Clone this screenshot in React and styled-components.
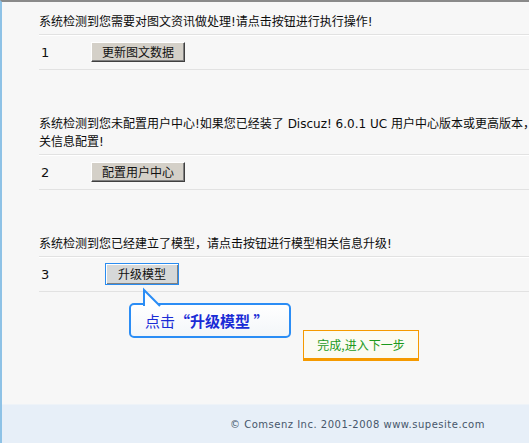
import React from "react";
import styled, { createGlobalStyle } from "styled-components";

const Global = createGlobalStyle`
  html, body { margin: 0; padding: 0; overflow: hidden; background: #f7f7f7; }
  body { font-family: "DejaVu Sans", "Noto Sans CJK SC", sans-serif; }
`;

const Page = styled.div`
  position: relative;
  width: 700px;
  min-height: 443px;
  border-top: 2px solid #8a8a8a;
  border-left: 2px solid #8ec2e6;
  box-sizing: border-box;
  background: #f7f7f7;
  display: flex;
  flex-direction: column;
`;

const Content = styled.div`
  padding: 11px 0 0 37px;
  display: flex;
  flex-direction: column;
`;

const Section = styled.section`
  & + & { margin-top: 45px; }
`;

const Note = styled.p`
  margin: 0;
  padding-bottom: 3px;
  font-size: 12px;
  line-height: 18px;
  color: #0c0c0c;
  white-space: nowrap;
  font-family: "DejaVu Sans", "Noto Sans CJK SC", sans-serif;
`;

const Row = styled.div`
  display: flex;
  align-items: center;
  height: 34px;
  border-top: 1px solid #e2e2e2;
  border-bottom: 1px solid #e2e2e2;
  box-shadow: inset 0 1px 0 #fff;
`;

const Num = styled.span`
  width: 52px;
  padding-left: 2px;
  box-sizing: border-box;
  font-size: 13px;
  color: #111;
  font-family: "DejaVu Sans", sans-serif;
`;

const ClassicButton = styled.button`
  margin-left: ${(p) => p.$offset || 0}px;
  height: ${(p) => p.$h || 20}px;
  padding: 0 ${(p) => p.$pad || 10}px;
  background: ${(p) => (p.$active ? "#d6d8d8" : "#d4d0c8")};
  border: 1px solid;
  border-color: ${(p) => (p.$active ? "#2a8cf0" : "#fff #404040 #404040 #fff")};
  box-shadow: ${(p) =>
    p.$active
      ? "inset 1px 1px 0 #fff, inset -1px -1px 0 #808080"
      : "inset -1px -1px 0 #808080"};
  font-family: "Noto Sans CJK SC", sans-serif;
  font-size: 12px;
  line-height: 16px;
  color: #111;
  cursor: pointer;
`;

const Actions = styled.div`
  margin-top: 38px;
  padding-left: 264px;
`;

const NextButton = styled.button`
  width: 116px;
  height: 31px;
  background: #fbfbf2;
  border: 1px solid #f59a00;
  border-bottom: 3px solid #f59a00;
  color: #1c9a1c;
  font-family: "Noto Sans CJK SC", sans-serif;
  font-size: 12px;
  padding: 0;
  cursor: pointer;
`;

const Footer = styled.footer`
  margin-top: auto;
  height: 38px;
  background: #e7eff8;
  border-top: 1px solid #eef3f8;
  display: flex;
  align-items: center;
  padding-left: 228px;
  font-family: "DejaVu Sans", sans-serif;
  font-size: 10px;
  letter-spacing: 0.5px;
  color: #46566a;
`;

const Callout = styled.div`
  position: absolute;
  left: 127px;
  top: 286px;
  width: 162px;
  height: 50px;
`;

const Bubble = styled.div`
  position: absolute;
  left: 0;
  top: 15px;
  width: 162px;
  height: 35px;
  box-sizing: border-box;
  border: 2px solid #2b8df5;
  border-radius: 5px;
  background: linear-gradient(#ffffff, #f3f6f9);
  display: flex;
  align-items: center;
  padding-left: 14px;
  font-family: "Noto Sans CJK SC", sans-serif;
  font-size: 15px;
  color: #1a2bd6;
`;

const Strong = styled.b`
  font-weight: 700;
`;

const Tail = styled.svg`
  position: absolute;
  left: 13px;
  top: 0;
  overflow: visible;
`;

export default function App() {
  return (
    <>
      <Global />
      <Page>
        <Content>
          <Section>
            <Note>系统检测到您需要对图文资讯做处理!请点击按钮进行执行操作!</Note>
            <Row>
              <Num>1</Num>
              <ClassicButton>更新图文数据</ClassicButton>
            </Row>
          </Section>
          <Section>
            <Note>
              系统检测到您未配置用户中心!如果您已经装了 Discuz! 6.0.1 UC 用户中心版本或更高版本，请进行相
              <br />
              关信息配置!
            </Note>
            <Row>
              <Num>2</Num>
              <ClassicButton>配置用户中心</ClassicButton>
            </Row>
          </Section>
          <Section>
            <Note>系统检测到您已经建立了模型，请点击按钮进行模型相关信息升级!</Note>
            <Row>
              <Num>3</Num>
              <ClassicButton $active $offset={14} $h={22} $pad={12}>升级模型</ClassicButton>
            </Row>
          </Section>
          <Actions>
            <NextButton>完成,进入下一步</NextButton>
          </Actions>
        </Content>
        <Footer>© Comsenz Inc. 2001-2008 www.supesite.com</Footer>
        <Callout>
          <Bubble>
            点击<Strong>“升级模型 ”</Strong>
          </Bubble>
          <Tail width="20" height="20" viewBox="0 0 20 20">
            <polygon points="2,2 2,18 18,18" fill="#fff" />
            <polyline points="2,18 2,2 18,18" fill="none" stroke="#2b8df5" strokeWidth="2" />
          </Tail>
        </Callout>
      </Page>
    </>
  );
}
